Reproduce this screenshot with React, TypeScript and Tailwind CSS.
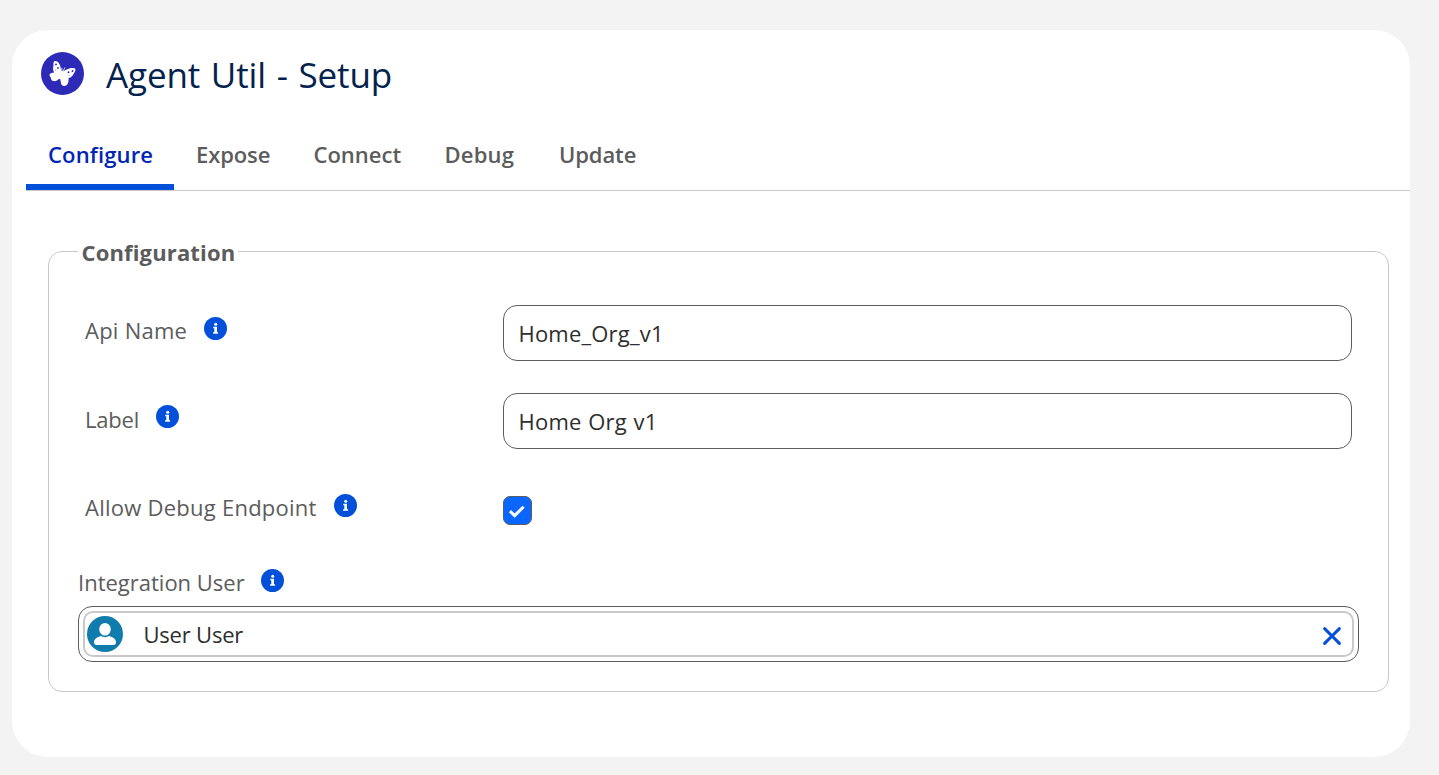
import React from "react";

function Butterfly() {
  return (
    <svg className="h-[43px] w-[43px] shrink-0" viewBox="0 0 43 43">
      <circle cx="21.5" cy="21.5" r="21.5" fill="#2e2ab8" />
      <path
        d="M13.1 9.4C14.8 8.5 17.2 9.8 18.4 12C19.5 14 19.8 16.6 20.2 18.6L22 19.6C24 18 26.2 16.8 28.6 16.4C31 15.9 33.9 16 34.4 17.2C34.9 18.6 33.5 20.3 32.7 21.8C31.6 24 30.2 25.6 27.6 26C27.5 27.6 27.8 29.3 27 31C26.2 33 24.8 34.2 22.7 34C20.6 33.8 19.8 31.8 19.8 29.8L19.2 27.2L18 26.8C16.6 28.4 14.6 29.6 12.2 29.1C10.3 28.6 9.7 27 9.9 25.6C8.4 24.6 8 22.8 9.2 21.6C10.4 20.6 12.2 20.8 13.2 20.4C12 18.8 11.8 16.8 12.3 14.8C12.7 12.8 12.1 10.3 13.1 9.4Z"
        fill="#fff"
      />
      <path d="M21.1 20L20.7 16.2M21.6 20L23.8 15.8" stroke="#fff" strokeWidth=".8" strokeLinecap="round" />
      <g fill="#2e2ab8">
        <circle cx="15" cy="12.4" r=".95" />
        <circle cx="17" cy="15.9" r=".95" />
        <circle cx="31.5" cy="19" r=".95" />
        <circle cx="27.5" cy="20.2" r=".95" />
        <circle cx="14.8" cy="17.8" r=".45" />
        <circle cx="28.2" cy="23.4" r=".45" />
      </g>
    </svg>
  );
}

function Info({ className }: { className: string }) {
  return (
    <svg className={`h-[23px] w-[23px] shrink-0 ${className}`} viewBox="0 0 23 23" aria-label="Help">
      <circle cx="11.5" cy="11.5" r="11.5" fill="#0250d9" />
      <circle cx="11.7" cy="7.2" r="1.5" fill="#fff" />
      <path d="M9.3 9.8H13V15.2H14.1V16.8H9.1V15.2H10.3V11.3H9.3Z" fill="#fff" />
    </svg>
  );
}

const tabs = [
  { name: "Configure", box: "w-[148px] pl-[22px] tracking-[0.15px]" },
  { name: "Expose", box: "w-[118px] pl-[22px] tracking-[-0.1px]" },
  { name: "Connect", box: "w-[131px] pl-[21.5px] tracking-[0px]" },
  { name: "Debug", box: "w-[114px] pl-[21.5px] tracking-[0.2px]" },
  { name: "Update", box: "w-[122px] pl-[22px] tracking-[-0.1px]" },
];

export default function App() {
  return (
    <div className="h-[775px] w-[1439px] overflow-hidden bg-[#f3f3f3] pt-[30px] pl-3 font-['Open_Sans','Noto_Sans',sans-serif] text-[22px] leading-[30px] text-[#5c5c5c]">
      <main className="h-[727px] w-[1398px] rounded-[36px] bg-white">
        <header className="flex h-[98px] items-start pt-[22px] pl-[29px]">
          <Butterfly />
          <h1 className="mt-px ml-[22px] text-[35px] leading-[44px] tracking-[-0.1px] whitespace-nowrap text-[#03234d] [word-spacing:1.6px]">
            Agent Util - Setup
          </h1>
        </header>

        <nav className="ml-[14px] flex h-[63px] border-b border-[#c9c9c9] font-semibold">
          {tabs.map((tab, i) => (
            <button
              key={tab.name}
              className={`flex h-[62px] items-start pt-[11px] text-left ${tab.box} ${
                i === 0 ? "border-b-[6px] border-[#0250d9] text-[#0225b4]" : ""
              }`}
            >
              <span>{tab.name}</span>
            </button>
          ))}
        </nav>

        <fieldset className="mt-[46px] ml-9 h-[455px] w-[1341px] rounded-[14px] border border-[#c9c9c9] pl-[29px]">
          <legend className="h-7 w-[160px] pl-[3.5px] leading-[30px] font-bold tracking-[0.15px]">
            Configuration
          </legend>

          <div className="mt-[40px] flex h-[56px]">
            <label className="flex w-[425px] pt-3 pl-[7px]">
              <span className="leading-[26px] tracking-[0.25px]">Api Name</span>
              <Info className="ml-[17px]" />
            </label>
            <input
              className="h-[56px] w-[849px] rounded-[14px] border border-[#5c5c5c] px-[14.5px] tracking-[0.2px] text-[#2e2e2e]"
              defaultValue="Home_Org_v1"
            />
          </div>

          <div className="mt-8 flex h-[56px]">
            <label className="flex w-[425px] pt-3 pl-[7px]">
              <span className="mt-px leading-[26px] tracking-[-0.2px]">Label</span>
              <Info className="ml-[17px]" />
            </label>
            <input
              className="h-[56px] w-[849px] rounded-[14px] border border-[#5c5c5c] px-[14.5px] tracking-[0.25px] text-[#2e2e2e] [word-spacing:0.5px]"
              defaultValue="Home Org v1"
            />
          </div>

          <div className="mt-[36px] flex h-[56px]">
            <label className="flex w-[425px] pt-[9px] pl-[7px]">
              <span className="leading-[26px] tracking-[0.25px]">Allow Debug Endpoint</span>
              <Info className="ml-[17px]" />
            </label>
            <span className="mt-[11px] flex h-[29px] w-[29px] items-center justify-center rounded-[7px] border border-[#5c5c5c] bg-[#0b66ff]">
              <svg className="h-[27px] w-[27px]" viewBox="0 0 27 27" fill="none">
                <path d="M6 14.2L10.6 18.6L19.6 9.8" stroke="#fff" strokeWidth="3" />
              </svg>
            </span>
          </div>

          <label className="mt-[28px] flex h-[37px]">
            <span className="leading-[26px]">Integration User</span>
            <Info className="ml-[16px]" />
          </label>
          <div className="flex h-[56px] w-[1281px] rounded-[14px] border border-[#5c5c5c] p-1">
            <div className="flex h-[46px] w-full items-center rounded-[10px] border-2 border-[#c9c9c9] pl-[2px] text-[#2e2e2e]">
              <svg className="h-9 w-9 shrink-0" viewBox="0 0 36 36">
                <circle cx="18" cy="18" r="18" fill="#107cad" />
                <ellipse cx="18" cy="13.3" rx="5.7" ry="6.3" fill="#fff" />
                <path
                  d="M7 26.3C7 22.8 10.5 21.4 13.8 20.1C16.3 21.6 19.7 21.6 22.2 20.1C25.5 21.4 29 22.8 29 26.3C29 28 28 29 26.5 29H9.5C8 29 7 28 7 26.3Z"
                  fill="#fff"
                />
              </svg>
              <span className="ml-[20.5px] flex-1 tracking-[-0.2px]">User User</span>
              <svg className="mt-[3px] mr-[11.5px] h-[18px] w-[18px]" viewBox="0 0 18 18">
                <path d="M1.6 1.6L16.4 16.4M16.4 1.6L1.6 16.4" stroke="#0250d9" strokeWidth="2.9" strokeLinecap="round" />
              </svg>
            </div>
          </div>
        </fieldset>
      </main>
    </div>
  );
}
